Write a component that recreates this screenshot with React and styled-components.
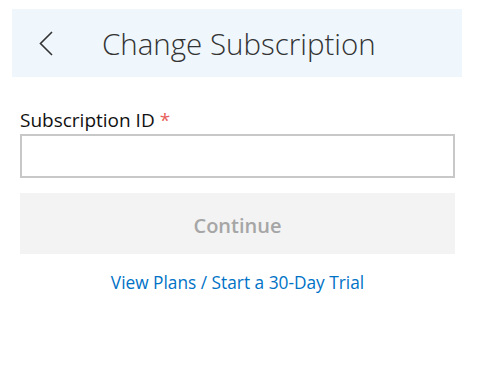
import styled, { createGlobalStyle } from "styled-components";

const GlobalStyle = createGlobalStyle`
    body {
        margin: 0;
        background: #fff;
        font-family: "Open Sans", "Noto Sans", sans-serif;
    }
`;

export default function App () {
    return (
        <>
            <GlobalStyle />
            <Page>
                <Header>
                    <BackButton type="button" aria-label="Back">
                        <svg width="16" height="25" viewBox="0 0 16 25">
                            <path d="M14 1 L2.5 12.5 L14 24" fill="none" stroke="#333" strokeWidth="1.6" />
                        </svg>
                    </BackButton>
                    <Title>Change Subscription</Title>
                </Header>
                <Form>
                    <Label>
                        Subscription ID <Required>*</Required>
                    </Label>
                    <Input type="text" />
                    <Button type="button" disabled>Continue</Button>
                    <LinkRow>
                        <Link href="#">View Plans / Start a 30-Day Trial</Link>
                    </LinkRow>
                </Form>
            </Page>
        </>
    );
}

const Page = styled.div`
    width: 450px;
    padding: 9px 0 0 12px;
`;

const Header = styled.div`
    display: flex;
    align-items: center;
    height: 68px;
    background: #eff6fc;
`;

const BackButton = styled.button`
    display: flex;
    align-items: center;
    justify-content: center;
    width: 16px;
    height: 25px;
    margin-left: 26px;
    padding: 0;
    border: none;
    background: none;
`;

const Title = styled.h1`
    margin: 0 0 0 48px;
    font-size: 29.5px;
    font-weight: 300;
    color: #333;
`;

const Form = styled.div`
    display: flex;
    flex-direction: column;
    padding: 31px 7px 0 8px;
`;

const Label = styled.label`
    font-size: 19px;
    line-height: 24px;
    color: #111;
    margin-bottom: 2px;
`;

const Required = styled.span`
    color: #e8605a;
`;

const Input = styled.input`
    box-sizing: border-box;
    height: 44px;
    border: 2px solid #c8c8c8;
    outline: none;
    font-size: 16px;
`;

const Button = styled.button`
    margin-top: 15px;
    height: 61px;
    padding: 4px 0 0;
    border: none;
    background: #f3f3f3;
    color: #a6a6a6;
    font-family: inherit;
    font-size: 20px;
    font-weight: 600;
`;

const LinkRow = styled.div`
    display: flex;
    justify-content: center;
    margin-top: 17px;
`;

const Link = styled.a`
    color: #0072c6;
    font-size: 17.3px;
    text-decoration: none;
`;
